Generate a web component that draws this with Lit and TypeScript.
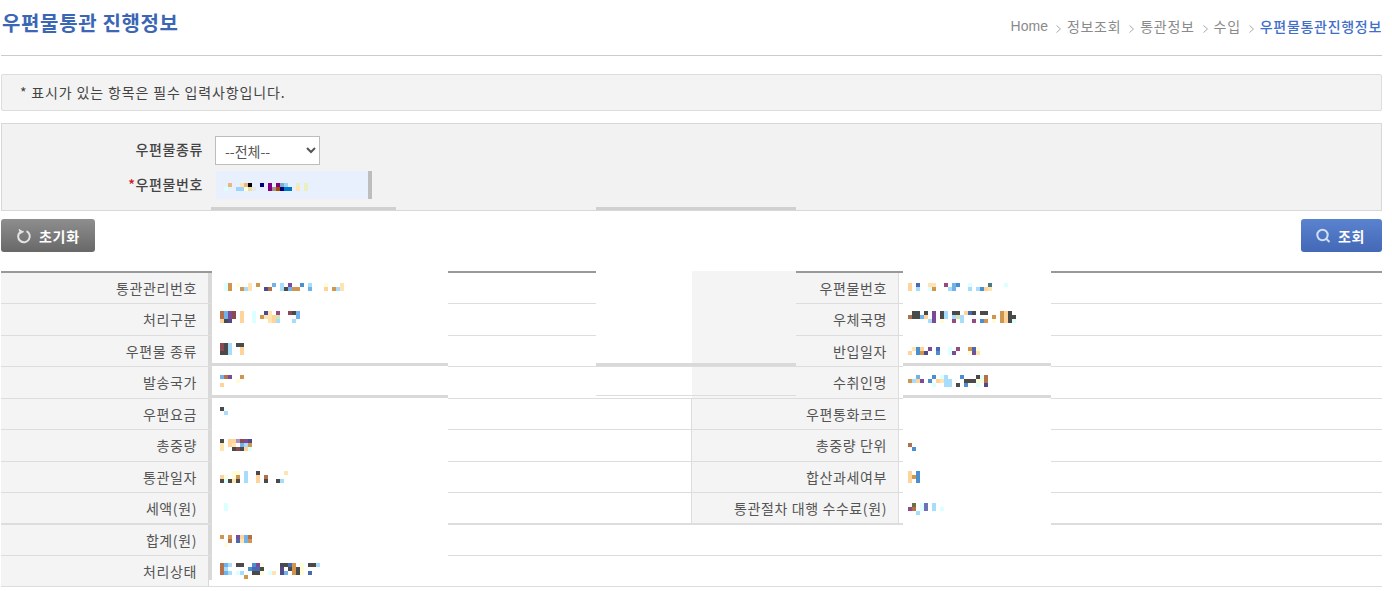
import { LitElement, html, css, svg } from "lit";
import { customElement } from "lit/decorators.js";

const PAL: Record<string, string> = {
  a: "#ffd49a", b: "#d09650", c: "#a8dcfc", d: "#6fb3ea", e: "#4a4a4a", f: "#b3704a",
  g: "#7b4a98", h: "#4f4a8a", i: "#fffcd8", j: "#dcffff", k: "#ffe3b0", l: "#4a90d0",
  m: "#964a80", n: "#8a4a50", o: "#4a6ab0", p: "#d0e8b0", q: "#b090c0", r: "#4a7a80",
  s: "#6a7048", t: "#7070b8", u: "#000000", v: "#000080", w: "#800080", x: "#a05000", y: "#0078c8", z: "#e8f0c0",
  A: "#e6b880", B: "#7ab0c0", C: "#a89088", D: "#ecdca8", E: "#e8ece0", F: "#9bd3fb",
};

function mosaic(rows: string[], top = 0) {
  const w = Math.max(...rows.map((r) => r.length)) * 4;
  const h = rows.length * 4;
  const rects = rows.flatMap((r, y) =>
    [...r].map((c, x) =>
      c === "." ? null : svg`<rect x=${x * 4} y=${y * 4} width="4" height="4" fill=${PAL[c]}></rect>`
    )
  );
  return html`<svg class="mosaic" style="margin-top:${top}px" width=${w} height=${h} shape-rendering="crispEdges">${rects}</svg>`;
}

type Cell = { label: string; rows?: string[]; top?: number };
type Row = { l: Cell; r?: Cell; cls?: string };

const ROWS: Row[] = [
  {
    l: { label: "통관관리번호", top: 10, rows: [".jb.i..k.b...d.c.g..l.c...i...k", ".jb..bck...hf..cedbb..d...a.bck"] },
    r: { label: "우편물번호", top: 10, rows: ["a.o..kk..m.dl..j....r...j", "a.c..jb...cd...c.clak"] },
  },
  {
    l: { label: "처리구분", top: 7, rows: ["fdgn.a..j..hk.m..ned", "fdgn.a..j.bkkap....d", "aeh..a..j...kac...c"] },
    r: { label: "우체국명", top: 7, rows: [".ee.e.g.ec.ee.aoe.ee...bae", "feeda.g.ec.cpc.......b.baee", ".....cg.i..m.c..m.lb.i.baej"] },
  },
  {
    l: { label: "우편물 종류", top: 7, rows: ["nec.ee", "nec..a", "eec..a"] },
    r: { label: "반입일자", top: 11, rows: [".kla.g.o..j.m..boi", "a.lbh..l..jg...igk"] },
  },
  {
    l: { label: "발송국가", top: 8, rows: ["dfg..b", "....i", "a"] },
    r: { label: "수취인명", top: 8, rows: ["..d...l.jc...l...ejf", "bcag.l.akcc...eeeiif", "......j..cc.e.l..j.h"] },
  },
  { cls: "split", l: { label: "우편요금", top: 8, rows: ["e", ".c"] }, r: { label: "우편통화코드" } },
  {
    cls: "split",
    l: { label: "총중량", top: 9, rows: ["e.aaqngh", "k.ak.dcb", "k..eneaj"] },
    r: { label: "총중량 단위", top: 13, rows: ["f", ".l"] },
  },
  {
    cls: "split",
    l: { label: "통관일자", top: 9, rows: ["...ii.c..e......k", "ai.ib.c..a.f", "ejeke.c..a.e..ec"] },
    r: { label: "합산과세여부", top: 9, rows: ["a.l", "abl", "a.l"] },
  },
  {
    cls: "split heavy",
    l: { label: "세액(원)", top: 10, rows: [".j", ".j"] },
    r: { label: "통관절차 대행 수수료(원)", top: 10, rows: [".s.jt.c", "mf.jt.c.j", "..c"] },
  },
  { l: { label: "합계(원)", top: 10, rows: ["b.b.gadf", "..f.okdb", ".i"] } },
  {
    l: {
      label: "처리상태",
      top: 7,
      rows: ["fdc.ee..lgi....eeob.i.eec", "fc.....looe....h.ebei", "fdc.jc..eei.jk.hd.bei.o", "......b"],
    },
  },
];

const value = (c: Cell) => (c.rows ? mosaic(c.rows, c.top) : null);

@customElement("app-root")
export class AppRoot extends LitElement {
  static styles = css`
    :host {
      display: block;
      font-family: "Noto Sans CJK KR", "Noto Sans", sans-serif;
      color: #444;
      background: #fff;
      height: 591px;
      overflow: hidden;
    }
    .page { width: 1381px; margin-left: 1px; }

    .head {
      box-sizing: border-box;
      border-bottom: 1px solid #ccc;
      display: flex;
      justify-content: space-between;
      margin-bottom: 18px;
      height: 56px;
    }
    h1 {
      margin: 8px 0 0 1px;
      font-size: 20px;
      line-height: 30px;
      font-weight: 700;
      color: #3b66b5;
      letter-spacing: 0.65px;
    }
    .crumbs {
      display: flex;
      align-items: center;
      height: 20px;
      margin-top: 16px;
      font-family: "Liberation Sans", "Noto Sans CJK KR", sans-serif;
      font-size: 14px;
      letter-spacing: 0.7px;
      color: #8a8a8a;
    }
    .crumbs .en { letter-spacing: 0; }
    .crumbs svg { margin: 5px 6px 0 8px; flex: none; }
    .crumbs .cur { color: #3f6fc9; font-weight: 500; }

    .notice {
      height: 37px;
      box-sizing: border-box;
      border: 1px solid #ddd;
      border-radius: 2px;
      background: #f3f3f3;
      padding: 0 0 2px 18px;
      display: flex;
      align-items: center;
      font-size: 14px;
      color: #444;
      letter-spacing: 0.85px;
      margin-bottom: 12px;
    }

    .form {
      height: 88px;
      box-sizing: border-box;
      border: 1px solid #d8d8d8;
      background: #f2f2f2;
      padding-top: 12px;
      display: flex;
      flex-direction: column;
    }
    .frow { display: flex; align-items: center; font-size: 14px; color: #444; }
    .frow label {
      width: 201px;
      text-align: right;
      margin-right: 12px;
      letter-spacing: 0.6px;
      padding-bottom: 3px;
      font-weight: 500;
    }
    .frow .req { color: #d01818; }
    select {
      width: 105px;
      height: 29px;
      box-sizing: border-box;
      border: 1px solid #bdbdbd;
      background: #fff;
      font: inherit;
      color: #555;
      padding-left: 5px;
    }
    .frow.second { margin-top: 6px; }
    .input {
      margin-left: 1px;
      background: #e8f0fe;
      border-right: 4px solid #bdbdbd;
      padding: 12px 0 0 8px;
      height: 16px;
      width: 144px;
    }
    .input svg { display: block; }
    .bars { display: flex; margin: auto 0 0 209px; gap: 200px; }
    .bars i { display: block; width: 185px; height: 3px; background: #d0d0d0; }
    .bars i + i { width: 200px; }

    .btns { display: flex; justify-content: space-between; margin: 8px 0 19px; }
    button {
      height: 33px;
      border: 0;
      border-radius: 3px;
      padding: 0;
      font: inherit;
      font-size: 14px;
      font-weight: 700;
      color: #fff;
      display: flex;
      align-items: center;
      letter-spacing: 0.7px;
    }
    .reset { width: 94px; background: linear-gradient(#8e8e8e, #686868); padding-left: 15px; gap: 7px; }
    .search { width: 81px; background: linear-gradient(#5a83cf, #4368b6); padding-left: 14px; gap: 6px; }

    .table {
      position: relative;
      border-top: 2px solid #999;
      display: grid;
      grid-template-rows: 31px 32px 31px 32px 31px 32px 31px 32px 31px 31px;
      font-size: 14px;
    }
    .row {
      display: flex;
      box-sizing: border-box;
      border-bottom: 1px solid #ddd;
      min-height: 0;
    }
    .row.heavy { border-bottom-width: 2px; }
    .th {
      position: relative;
      z-index: 1;
      box-sizing: border-box;
      flex: none;
      background: #f4f4f4;
      display: flex;
      align-items: center;
      justify-content: flex-end;
      color: #555;
      white-space: nowrap;
      letter-spacing: 0.6px;
      padding-bottom: 1px;
    }
    .th.left { width: 211px; border-right: 4px solid #d9d9d9; padding-right: 11px; }
    .th.right { width: 207px; border-right: 1px solid #ddd; padding-right: 11px; }
    .split .th.right { box-shadow: -1px 0 0 #ddd; }
    .td { position: relative; z-index: 1; flex: none; box-sizing: border-box; }
    .td.left { width: 480px; padding-left: 8px; }
    .td.right { padding-left: 9px; }
    .mosaic { display: block; }

    .patch { position: absolute; }
    .mask-l { left: 211px; width: 236px; top: -2px; height: 309px; background: #fff; }
    .notch { left: 208px; width: 3px; top: 307px; height: 6px; background: #fff; z-index: 2; }
    .mask-r { left: 902px; width: 148px; top: -2px; height: 254px; background: #fff; }
    .gap-w { left: 595px; width: 96px; top: -2px; height: 92px; background: #fff; }
    .gap-g { left: 691px; width: 104px; top: -2px; height: 92px; background: #f4f4f4; }
    .band { height: 3px; background: #d9d9d9; z-index: 2; }
    .y1 { top: 90px; }
    .y2 { top: 122px; }
    .bl { left: 211px; width: 236px; }
    .br { left: 902px; width: 148px; }
    .bm { left: 595px; width: 200px; }
    .thin { left: 595px; width: 200px; top: 122px; height: 1px; background: #ddd; z-index: 2; }
  `;

  render() {
    return html`
      <div class="page">
        <div class="head">
          <h1>우편물통관 진행정보</h1>
          <div class="crumbs">
            <span class="en">Home</span>${this.chev()}<span>정보조회</span>${this.chev()}<span>통관정보</span>${this.chev()}<span>수입</span>${this.chev()}<span class="cur">우편물통관진행정보</span>
          </div>
        </div>
        <div class="notice">* 표시가 있는 항목은 필수 입력사항입니다.</div>
        <div class="form">
          <div class="frow">
            <label>우편물종류</label>
            <select><option>--전체--</option></select>
          </div>
          <div class="frow second">
            <label><span class="req">*</span>우편물번호</label>
            <div class="input">
              ${mosaic([".A..kAu..v.w.wBF..z.z", "j..FFiDE...wCxvyy.k.z"])}
            </div>
          </div>
          <div class="bars"><i></i><i></i></div>
        </div>
        <div class="btns">
          <button class="reset">
            <svg width="16" height="16" viewBox="0 0 16 16" fill="none" stroke="#e4e4e4" stroke-width="2">
              <path d="M10.5 3.2A5.8 5.8 0 1 1 4 4.2"></path>
              <path d="M3.2 1.2 L4.6 5 L7.6 3.4" stroke-width="1.4" fill="#e4e4e4"></path>
            </svg>
            초기화
          </button>
          <button class="search">
            <svg width="17" height="17" viewBox="0 0 17 17" fill="none" stroke="#d2def3" stroke-width="2">
              <circle cx="7.5" cy="8" r="5.2"></circle>
              <path d="M11.5 12 L14.5 15"></path>
            </svg>
            조회
          </button>
        </div>
        <div class="table">
          <div class="patch mask-l"></div>
          <div class="patch notch"></div>
          <div class="patch mask-r"></div>
          <div class="patch gap-w"></div>
          <div class="patch gap-g"></div>
          <div class="patch band y1 bl"></div>
          <div class="patch band y2 bl"></div>
          <div class="patch band y1 br"></div>
          <div class="patch band y2 br"></div>
          <div class="patch band y1 bm"></div>
          <div class="patch thin"></div>
          ${ROWS.map(
            (r) => html`
              <div class="row ${r.cls ?? ""}">
                <div class="th left">${r.l.label}</div>
                <div class="td left">${value(r.l)}</div>
                ${r.r
                  ? html`<div class="th right">${r.r.label}</div>
                      <div class="td right">${value(r.r)}</div>`
                  : null}
              </div>
            `
          )}
        </div>
      </div>
    `;
  }

  chev() {
    return html`<svg width="5" height="8" viewBox="0 0 5 8" fill="none" stroke="#aaa" stroke-width="1"><path d="M0.5 0.5 L4.5 4 L0.5 7.5"></path></svg>`;
  }
}
